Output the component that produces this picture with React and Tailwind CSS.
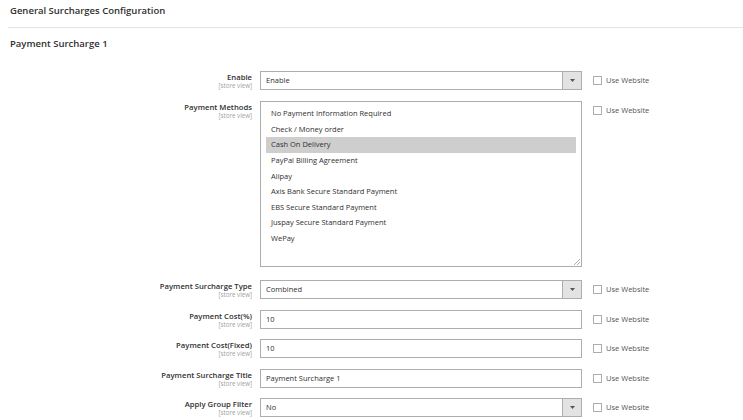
import React from "react";

const font = { fontFamily: "'Open Sans', 'Liberation Sans', sans-serif" };

const methods = [
  "No Payment Information Required",
  "Check / Money order",
  "Cash On Delivery",
  "PayPal Billing Agreement",
  "Alipay",
  "Axis Bank Secure Standard Payment",
  "EBS Secure Standard Payment",
  "Juspay Secure Standard Payment",
  "WePay",
];

const Label = ({ text }) => (
  <div className="w-[260px] shrink-0 pr-[8px] text-right pt-[1px]">
    <div className="text-[7.7px] leading-[10px] font-semibold text-[#303030]">{text}</div>
    <div className="text-[6.2px] leading-[7px] text-[#a0a0a0]">[store view]</div>
  </div>
);

const UseWebsite = () => (
  <div className="flex items-center ml-[11px] h-[19px]">
    <span className="w-[9px] h-[9px] border border-[#adadad] bg-white" />
    <span className="ml-[4px] text-[7.5px] text-[#555]">Use Website</span>
  </div>
);

const Select = ({ value }) => (
  <div className="w-[322px] h-[19px] border border-[#adadad] flex items-center bg-white">
    <span className="flex-1 pl-[5px] text-[7.5px] text-[#303030]">{value}</span>
    <span className="w-[19px] h-full bg-[#e3e3e3] border-l border-[#adadad] flex items-center justify-center">
      <svg width="5" height="3" viewBox="0 0 5 3">
        <path d="M0 0h5L2.5 3z" fill="#555" />
      </svg>
    </span>
  </div>
);

const Input = ({ value }) => (
  <div className="w-[322px] h-[19px] border border-[#adadad] flex items-center bg-white">
    <span className="pl-[5px] text-[7.5px] text-[#303030]">{value}</span>
  </div>
);

const Row = ({ label, h, children }) => (
  <div className="flex items-start" style={{ height: h }}>
    <Label text={label} />
    {children}
    <UseWebsite />
  </div>
);

export default function App() {
  return (
    <div className="w-[743px] h-[420px] bg-white overflow-hidden" style={font}>
      <div className="ml-[8px] h-[28px] border-b border-[#e3e3e3] pl-[2px] pt-[4px]">
        <h2 className="text-[9.5px] font-semibold text-[#303030]">General Surcharges Configuration</h2>
      </div>
      <div className="pl-[10px] h-[43px] pt-[9px]">
        <h3 className="text-[9.5px] font-semibold text-[#303030]">Payment Surcharge 1</h3>
      </div>
      <Row label="Enable" h={30}>
        <Select value="Enable" />
      </Row>
      <Row label="Payment Methods" h={179}>
        <div className="relative w-[322px] h-[166px] border border-[#adadad] bg-white pt-[4px] px-[5px]">
          {methods.map((m) => (
            <div
              key={m}
              className={`h-[15.6px] flex items-center pl-[5px] text-[7.5px] text-[#303030] ${
                m === "Cash On Delivery" ? "bg-[#cecece]" : ""
              }`}
            >
              {m}
            </div>
          ))}
          <svg className="absolute right-[1px] bottom-[1px]" width="7" height="7" viewBox="0 0 7 7">
            <path d="M7 1L1 7M7 4L4 7" stroke="#999" strokeWidth="0.8" />
          </svg>
        </div>
      </Row>
      <Row label="Payment Surcharge Type" h={30}>
        <Select value="Combined" />
      </Row>
      <Row label="Payment Cost(%)" h={29}>
        <Input value="10" />
      </Row>
      <Row label="Payment Cost(Fixed)" h={30}>
        <Input value="10" />
      </Row>
      <Row label="Payment Surcharge Title" h={29}>
        <Input value="Payment Surcharge 1" />
      </Row>
      <Row label="Apply Group Filter" h={30}>
        <Select value="No" />
      </Row>
    </div>
  );
}
